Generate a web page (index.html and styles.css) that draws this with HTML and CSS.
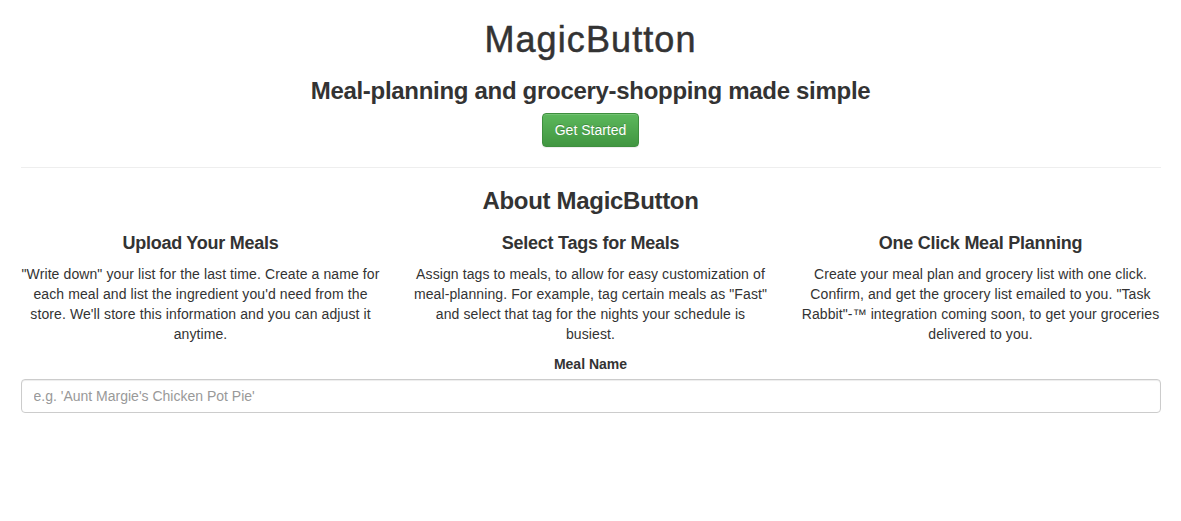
FILE: index.html
```html
<!DOCTYPE html>
<html lang="en">
<head>
<meta charset="utf-8">
<title>MagicButton</title>
<link rel="stylesheet" href="styles.css">
</head>
<body>
<div class="container">
  <header class="hero">
    <h1 class="title">MagicButton</h1>
    <h3 class="subtitle">Meal-planning and grocery-shopping made simple</h3>
    <button class="btn-success" type="button">Get Started</button>
  </header>
  <hr class="divider">
  <section class="about">
    <h3 class="section-title">About MagicButton</h3>
    <div class="features">
      <div class="feature">
        <h4 class="feature-title">Upload Your Meals</h4>
        <p class="feature-text">"Write down" your list for the last time. Create a name for each meal and list the ingredient you'd need from the store. We'll store this information and you can adjust it anytime.</p>
      </div>
      <div class="feature">
        <h4 class="feature-title">Select Tags for Meals</h4>
        <p class="feature-text">Assign tags to meals, to allow for easy customization of meal-planning. For example, tag certain meals as "Fast" and select that tag for the nights your schedule is busiest.</p>
      </div>
      <div class="feature">
        <h4 class="feature-title">One Click Meal Planning</h4>
        <p class="feature-text">Create your meal plan and grocery list with one click. Confirm, and get the grocery list emailed to you. "Task Rabbit"-™ integration coming soon, to get your groceries delivered to you.</p>
      </div>
    </div>
  </section>
  <form class="meal-form">
    <label class="form-label" for="meal-name">Meal Name</label>
    <input class="form-control" id="meal-name" type="text" placeholder="e.g. 'Aunt Margie's Chicken Pot Pie'">
  </form>
</div>
</body>
</html>
```

FILE: styles.css
```css
* { box-sizing: border-box; }
html, body { margin: 0; padding: 0; background: #fff; }
body {
  font-family: "Liberation Sans", Arial, Helvetica, sans-serif;
  font-size: 14px;
  line-height: 20px;
  color: #333;
}
.container {
  width: 1170px;
  margin: 0 auto;
  padding: 0 15px;
}
.hero {
  display: flex;
  flex-direction: column;
  align-items: center;
  text-align: center;
}
.title {
  font-size: 36px;
  line-height: 39.6px;
  font-weight: normal;
  letter-spacing: 1.1px;
  -webkit-text-stroke: 0.5px #333;
  margin: 20px 0 0;
}
.subtitle {
  font-size: 24px;
  line-height: 26.4px;
  font-weight: bold;
  letter-spacing: -0.3px;
  margin: 18px 0 9px;
}
.btn-success {
  font-family: inherit;
  font-size: 14px;
  line-height: 20px;
  padding: 6px 12px;
  color: #fff;
  background-image: linear-gradient(to bottom, #5cb85c 0, #419641 100%);
  border: 1px solid #3e8f3e;
  border-radius: 4px;
  text-shadow: 0 -1px 0 rgba(0,0,0,.2);
  box-shadow: inset 0 1px 0 rgba(255,255,255,.15), 0 1px 1px rgba(0,0,0,.075);
  cursor: pointer;
}
.divider {
  margin: 20px 0;
  border: 0;
  border-top: 1px solid #eee;
  height: 0;
}
.about { text-align: center; }
.section-title {
  font-size: 24px;
  line-height: 26.4px;
  font-weight: bold;
  letter-spacing: -0.3px;
  margin: 20px 0 10px;
}
.features {
  display: grid;
  grid-template-columns: repeat(3, 1fr);
  margin: 0 -15px;
}
.feature { padding: 0 15px; }
.feature-title {
  font-size: 18px;
  line-height: 19.8px;
  font-weight: bold;
  letter-spacing: -0.25px;
  margin: 10px 0 10px;
}
.feature-text {
  margin: 0 0 10px;
  letter-spacing: 0.1px;
}
.meal-form {
  display: flex;
  flex-direction: column;
  align-items: center;
}
.form-label {
  font-weight: bold;
  margin-bottom: 5px;
}
.form-control {
  width: 100%;
  height: 34px;
  padding: 6px 12px;
  font-family: inherit;
  font-size: 14px;
  line-height: 20px;
  color: #555;
  background: #fff;
  border: 1px solid #ccc;
  border-radius: 4px;
  box-shadow: inset 0 1px 1px rgba(0,0,0,.075);
}
.form-control::placeholder { color: #999; }
```
